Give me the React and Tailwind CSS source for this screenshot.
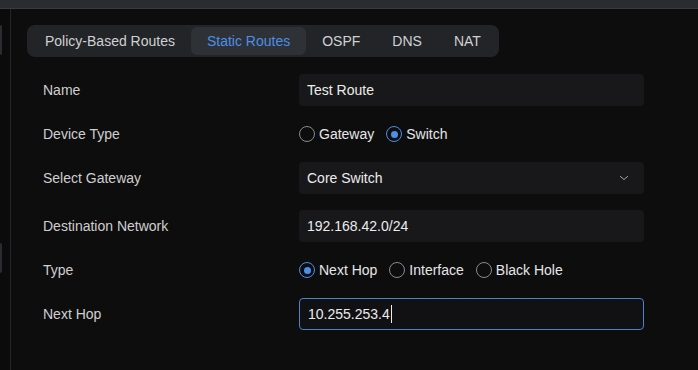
import { useState } from 'react';

const tabs = ['Policy-Based Routes', 'Static Routes', 'OSPF', 'DNS', 'NAT'];

const Radio = ({ label, checked, onChange }) => (
  <label className="flex items-center gap-[4px] cursor-pointer">
    <span
      className={`w-[16px] h-[16px] rounded-full border flex items-center justify-center ${
        checked ? 'border-[#4d8fe6]' : 'border-[#8a8a8a]'
      }`}
    >
      {checked && <span className="w-[7px] h-[7px] rounded-full bg-[#4d8fe6]"></span>}
    </span>
    <input type="radio" checked={checked} onChange={onChange} className="sr-only" />
    <span className="text-[14px] text-[#e6e6e6]">{label}</span>
  </label>
);

const Field = ({ label, children }) => (
  <div className="flex items-center">
    <div className="w-[256px] text-[14px] text-[#cfcfcf]">{label}</div>
    <div className="w-[345px]">{children}</div>
  </div>
);

export default function App() {
  const [activeTab, setActiveTab] = useState('Static Routes');
  const [deviceType, setDeviceType] = useState('switch');
  const [routeType, setRouteType] = useState('next-hop');
  const [name, setName] = useState('Test Route');
  const [dest, setDest] = useState('192.168.42.0/24');
  const [nextHop, setNextHop] = useState('10.255.253.4');

  return (
    <div className="w-[698px] h-[370px] flex flex-col bg-[#0d0d0e] overflow-hidden font-['Liberation_Sans',Arial,sans-serif]">
      {/* Top strip */}
      <div className="h-[9px] shrink-0 bg-[#2a2c2f] border-b border-[#3a3c40]"></div>

      <div className="flex flex-1 min-h-0">
        {/* Sidebar edge */}
        <div className="w-[11px] shrink-0 border-r border-[#252628] bg-[#0b0b0c] flex flex-col">
          <div className="mt-[16px] h-[30px] w-[2px] rounded-r bg-[#2a2c2f]"></div>
          <div className="mt-[188px] h-[30px] w-[2px] rounded-r bg-[#2a2c2f]"></div>
        </div>

        {/* Main */}
        <div className="flex-1 pl-[16px] pt-[16px]">
          {/* Tabs */}
          <div className="inline-flex p-[2px] rounded-lg bg-[#222427]">
            {tabs.map((tab) => (
              <button
                key={tab}
                onClick={() => setActiveTab(tab)}
                className={`h-[28px] px-4 rounded-md text-[14px] ${
                  activeTab === tab ? 'bg-[#2e3135] text-[#4d8fe6]' : 'text-[#cfd1d4]'
                }`}
              >
                {tab}
              </button>
            ))}
          </div>

          {/* Form */}
          <div className="mt-[17px] pl-4 flex flex-col gap-4">
            <Field label="Name">
              <input
                value={name}
                onChange={(e) => setName(e.target.value)}
                className="w-full h-[32px] px-2 rounded bg-[#18181a] text-[14px] text-[#ececec] outline-none"
              />
            </Field>

            <Field label="Device Type">
              <div className="h-[24px] flex items-center gap-3">
                <Radio label="Gateway" checked={deviceType === 'gateway'} onChange={() => setDeviceType('gateway')} />
                <Radio label="Switch" checked={deviceType === 'switch'} onChange={() => setDeviceType('switch')} />
              </div>
            </Field>

            <Field label="Select Gateway">
              <div className="w-full h-[32px] px-2 rounded bg-[#18181a] flex items-center justify-between">
                <span className="text-[14px] text-[#ececec]">Core Switch</span>
                <svg className="w-[12px] h-[12px] mr-[6px]" fill="none" stroke="#a8a8a8" viewBox="0 0 24 24">
                  <path strokeLinecap="round" strokeLinejoin="round" strokeWidth={2} d="M5 9l7 6 7-6" />
                </svg>
              </div>
            </Field>

            <Field label="Destination Network">
              <input
                value={dest}
                onChange={(e) => setDest(e.target.value)}
                className="w-full h-[32px] px-2 rounded bg-[#18181a] text-[14px] text-[#ececec] outline-none"
              />
            </Field>

            <Field label="Type">
              <div className="h-[24px] flex items-center gap-3">
                <Radio label="Next Hop" checked={routeType === 'next-hop'} onChange={() => setRouteType('next-hop')} />
                <Radio label="Interface" checked={routeType === 'interface'} onChange={() => setRouteType('interface')} />
                <Radio label="Black Hole" checked={routeType === 'black-hole'} onChange={() => setRouteType('black-hole')} />
              </div>
            </Field>

            <Field label="Next Hop">
              <div className="w-full h-[32px] px-2 rounded border border-[#4a84c8] bg-[#111113] flex items-center">
                <input
                  value={nextHop}
                  onChange={(e) => setNextHop(e.target.value)}
                  className="w-[84px] bg-transparent text-[14px] text-[#ececec] outline-none"
                />
                <span className="w-px h-[18px] bg-[#ececec] -ml-[1px]"></span>
              </div>
            </Field>
          </div>
        </div>
      </div>
    </div>
  );
}
